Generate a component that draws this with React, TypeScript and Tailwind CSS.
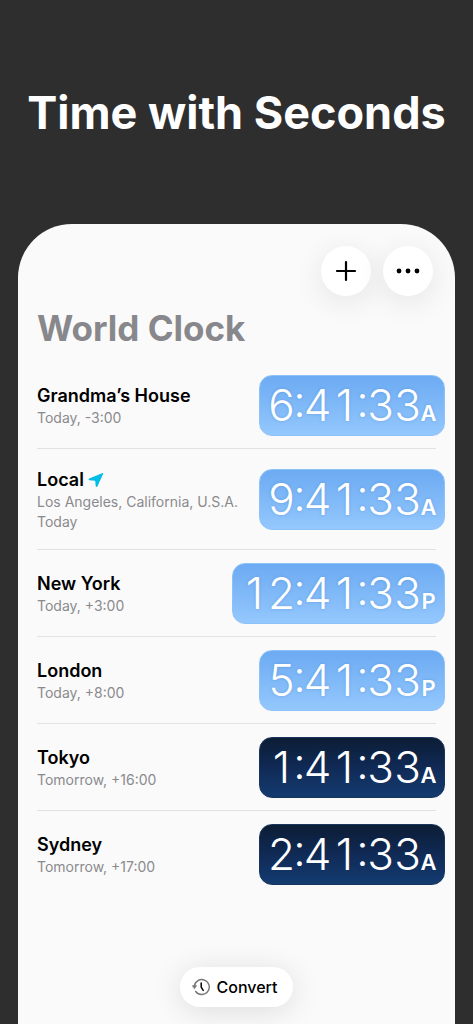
import clsx from "clsx";

type City = {
	name: string;
	details: string[];
	time: string;
	period: "A" | "P";
	isNight?: boolean;
	isLocal?: boolean;
};

const cities: City[] = [
	{ name: "Grandma’s House", details: ["Today, -3:00"], time: "6:41:33", period: "A" },
	{
		name: "Local",
		details: ["Los Angeles, California, U.S.A.", "Today"],
		time: "9:41:33",
		period: "A",
		isLocal: true,
	},
	{ name: "New York", details: ["Today, +3:00"], time: "12:41:33", period: "P" },
	{ name: "London", details: ["Today, +8:00"], time: "5:41:33", period: "P" },
	{ name: "Tokyo", details: ["Tomorrow, +16:00"], time: "1:41:33", period: "A", isNight: true },
	{ name: "Sydney", details: ["Tomorrow, +17:00"], time: "2:41:33", period: "A", isNight: true },
];

const PlusIcon = () => (
	<svg viewBox="0 0 22 22" className="size-[22px]" fill="none" stroke="currentColor" strokeWidth="2.2" strokeLinecap="round" aria-hidden="true">
		<path d="M11 2v18M2 11h18" />
	</svg>
);

const MoreIcon = () => (
	<svg viewBox="0 0 24 6" className="h-[6px] w-6" fill="currentColor" aria-hidden="true">
		<circle cx="3" cy="3" r="2.4" />
		<circle cx="12" cy="3" r="2.4" />
		<circle cx="21" cy="3" r="2.4" />
	</svg>
);

const LocationIcon = () => (
	<svg viewBox="0 0 16 16" className="size-4 text-[#00bde8]" fill="currentColor" aria-label="Current location">
		<path d="M14.1 1.2 1.2 6.5c-.9.4-.8 1.7.3 1.8l5.4.5c.2 0 .3.1.3.3l.5 5c.1 1.1 1.4 1.2 1.8.2L15.1 2c.3-.6-.3-1.1-1-.8Z" />
	</svg>
);

const HistoryIcon = () => (
	<svg viewBox="0 0 18 18" className="size-[18px]" fill="none" strokeLinecap="round" strokeLinejoin="round" aria-hidden="true">
		<path d="M2.3 8.2a7.5 7.5 0 1 1 1.4 5.3" stroke="#77777a" strokeWidth="1.4" />
		<path d="M.3 7.6h4.6L2.4 10.8Z" fill="#77777a" stroke="#77777a" strokeWidth=".4" />
		<path d="M9.2 5v4.2l2 3.2" stroke="#000" strokeWidth="1.5" />
	</svg>
);

// Digits and colons get fixed cells so the clocks line up from row to row
const ClockFace = ({ time }: { time: string }) => (
	<span className="flex text-[44px] leading-[59px] font-[270]">
		{time.split("").map((char, index) => (
			<span key={index} className={clsx("flex justify-center", char === ":" ? "-mt-1 w-[9px]" : "w-[27px]")}>
				{char}
			</span>
		))}
	</span>
);

const CityRow = ({ city }: { city: City }) => (
	<li className="flex items-center justify-between border-b border-[#e2e2e3] pt-[13px] pb-3 last:border-b-0">
		<div className={clsx("min-w-0", city.isLocal && "pt-[6px] pb-[5px]")}>
			<h2 className="flex items-center gap-1 text-lg leading-6 font-semibold text-black">
				{city.name}
				{city.isLocal && <LocationIcon />}
			</h2>
			{city.details.map((detail) => (
				<p key={detail} className="text-sm leading-5 whitespace-nowrap text-[#8a8a8e]">
					{detail}
				</p>
			))}
		</div>
		<time
			className={clsx(
				"-mr-[9px] flex h-[61px] shrink-0 items-baseline rounded-[13px] border bg-linear-to-b pr-2 pl-2 text-white",
				city.isNight
					? "border-[#1a355c] from-[#0c1d35] via-[#102a56] to-[#133b70]"
					: "border-[#8dc2f9] from-[#6caaf2] to-[#94c8fd] text-shadow-[0_0_3px_rgb(50_110_180/0.35)]"
			)}
		>
			<ClockFace time={city.time} />
			<span className="flex w-[15px] justify-center text-[22px] font-semibold">{city.period}</span>
		</time>
	</li>
);

const App = () => {
	return (
		<div className="flex min-h-screen flex-col bg-[#2e2e2e] px-[18px] font-['Inter',sans-serif]">
			<h1 className="flex h-56 items-center justify-center pt-[2px] text-center text-[45px] leading-[56px] font-bold whitespace-nowrap text-white">
				Time with Seconds
			</h1>
			<main className="flex flex-1 flex-col rounded-t-[54px] bg-[#fafafa] px-[19px] pt-[22px]">
				<div className="flex justify-end gap-3 pr-[3px]">
					<button type="button" aria-label="Add city" className="flex size-[50px] items-center justify-center rounded-full bg-white text-black shadow-[0_6px_30px_rgb(0_0_0/0.09)]">
						<PlusIcon />
					</button>
					<button type="button" aria-label="More options" className="flex size-[50px] items-center justify-center rounded-full bg-white text-black shadow-[0_6px_30px_rgb(0_0_0/0.09)]">
						<MoreIcon />
					</button>
				</div>
				<h2 className="mt-3 text-[35px] leading-10 font-bold text-[#88888c]">World Clock</h2>
				<ul className="mt-[14px]">
					{cities.map((city) => (
						<CityRow key={city.name} city={city} />
					))}
				</ul>
				<div className="mt-auto flex justify-center pb-[17px]">
					<button type="button" className="flex h-10 items-center gap-[7px] rounded-full bg-white px-3 pr-4 text-base font-medium text-black shadow-[0_4px_30px_rgb(0_0_0/0.12)]">
						<HistoryIcon />
						Convert
					</button>
				</div>
			</main>
		</div>
	);
};

export default App;
